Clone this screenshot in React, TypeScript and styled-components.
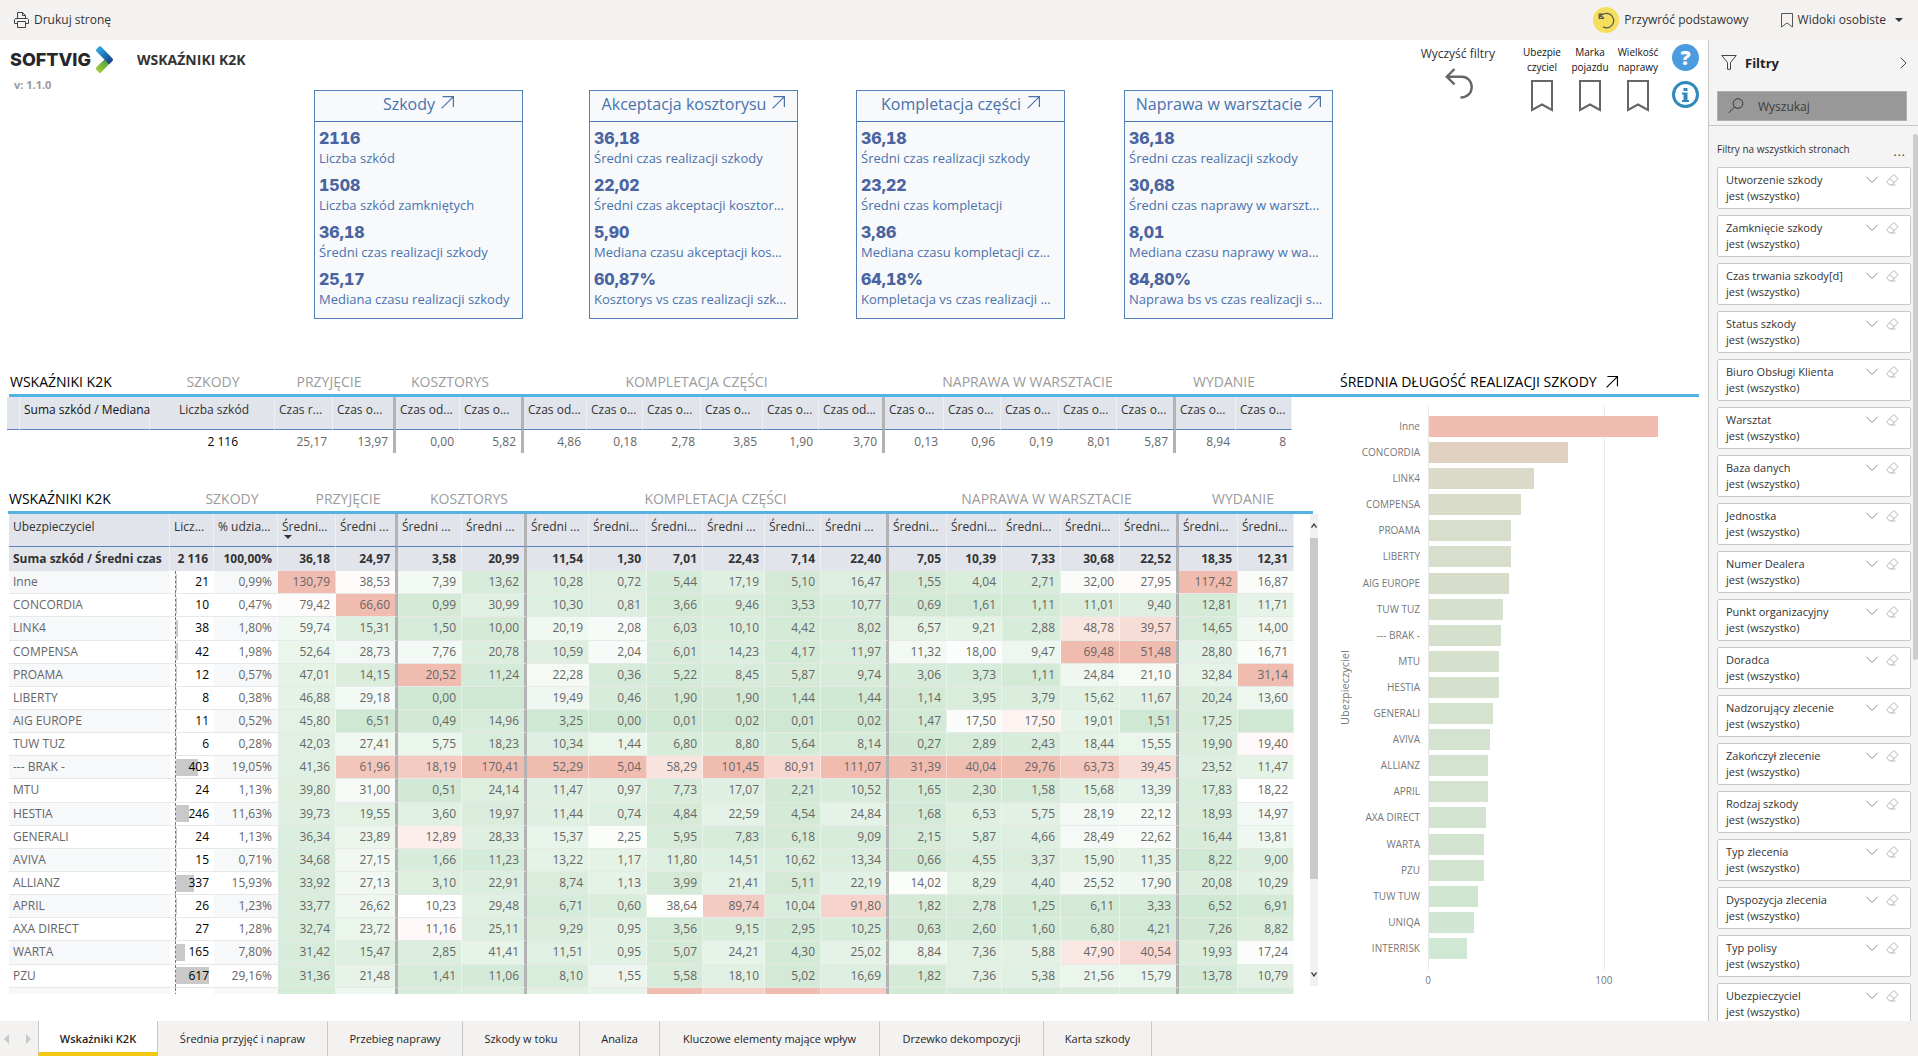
import React from "react";
import styled, { createGlobalStyle } from "styled-components";

/* ---------- data ---------- */

const filters = [
  "Utworzenie szkody",
  "Zamknięcie szkody",
  "Czas trwania szkody[d]",
  "Status szkody",
  "Biuro Obsługi Klienta",
  "Warsztat",
  "Baza danych",
  "Jednostka",
  "Numer Dealera",
  "Punkt organizacyjny",
  "Doradca",
  "Nadzorujący zlecenie",
  "Zakończył zlecenie",
  "Rodzaj szkody",
  "Typ zlecenia",
  "Dyspozycja zlecenia",
  "Typ polisy",
  "Ubezpieczyciel",
];

const tabs: [string, number][] = [
  ["Wskaźniki K2K", 120],
  ["Średnia przyjęć i napraw", 170],
  ["Przebieg naprawy", 135],
  ["Szkody w toku", 117],
  ["Analiza", 80],
  ["Kluczowe elementy mające wpływ", 220],
  ["Drzewko dekompozycji", 164],
  ["Karta szkody", 108],
];

const kpis = [
  {
    title: "Szkody",
    items: [
      ["2116", "Liczba szkód"],
      ["1508", "Liczba szkód zamkniętych"],
      ["36,18", "Średni czas realizacji szkody"],
      ["25,17", "Mediana czasu realizacji szkody"],
    ],
  },
  {
    title: "Akceptacja kosztorysu",
    items: [
      ["36,18", "Średni czas realizacji szkody"],
      ["22,02", "Średni czas akceptacji kosztor..."],
      ["5,90", "Mediana czasu akceptacji kos..."],
      ["60,87%", "Kosztorys vs czas realizacji szk..."],
    ],
  },
  {
    title: "Kompletacja części",
    items: [
      ["36,18", "Średni czas realizacji szkody"],
      ["23,22", "Średni czas kompletacji"],
      ["3,86", "Mediana czasu kompletacji cz..."],
      ["64,18%", "Kompletacja vs czas realizacji ..."],
    ],
  },
  {
    title: "Naprawa w warsztacie",
    items: [
      ["36,18", "Średni czas realizacji szkody"],
      ["30,68", "Średni czas naprawy w warszt..."],
      ["8,01", "Mediana czasu naprawy w wa..."],
      ["84,80%", "Naprawa bs vs czas realizacji s..."],
    ],
  },
];

const groups = ["SZKODY", "PRZYJĘCIE", "KOSZTORYS", "KOMPLETACJA CZĘŚCI", "NAPRAWA W WARSZTACIE", "WYDANIE"];

const medianCols = [13, 130, 125, 58, 63, 64, 64, 63, 56, 58, 62, 56, 66, 59, 57, 58, 58, 59, 60, 56];
const medianHeads = [
  "Czas r...", "Czas o...", "Czas od...", "Czas o...", "Czas od...", "Czas o...", "Czas o...", "Czas o...",
  "Czas o...", "Czas od...", "Czas o...", "Czas o...", "Czas o...", "Czas o...", "Czas o...", "Czas o...", "Czas o...",
];
const medianValues = [
  "25,17", "13,97", "0,00", "5,82", "4,86", "0,18", "2,78", "3,85", "1,90", "3,70",
  "0,13", "0,96", "0,19", "8,01", "5,87", "8,94", "8",
];

const avgCols = [161, 44, 64, 58, 62, 64, 65, 62, 58, 56, 62, 56, 68, 58, 55, 59, 59, 59, 59, 56];
const avgHeads = [
  "Średni...", "Średni ...", "Średni ...", "Średni ...", "Średni ...", "Średni...", "Średni...", "Średni ...",
  "Średni...", "Średni ...", "Średni...", "Średni...", "Średni...", "Średni...", "Średni...", "Średni...", "Średni...",
];
const avgTotals = "36,18 24,97 3,58 20,99 11,54 1,30 7,01 22,43 7,14 22,40 7,05 10,39 7,33 30,68 22,52 18,35 12,31".split(" ");

/* indexes of the measures that close a process stage */
const stageEnds = new Set([1, 3, 9, 14]);

/* name | claims | share | seventeen averages, "-" stands for no data */
const avgRows = `Inne|21|0,99%|130,79 38,53 7,39 13,62 10,28 0,72 5,44 17,19 5,10 16,47 1,55 4,04 2,71 32,00 27,95 117,42 16,87
CONCORDIA|10|0,47%|79,42 66,60 0,99 30,99 10,30 0,81 3,66 9,46 3,53 10,77 0,69 1,61 1,11 11,01 9,40 12,81 11,71
LINK4|38|1,80%|59,74 15,31 1,50 10,00 20,19 2,08 6,03 10,10 4,42 8,02 6,57 9,21 2,88 48,78 39,57 14,65 14,00
COMPENSA|42|1,98%|52,64 28,73 7,76 20,78 10,59 2,04 6,01 14,23 4,17 11,97 11,32 18,00 9,47 69,48 51,48 28,80 16,71
PROAMA|12|0,57%|47,01 14,15 20,52 11,24 22,28 0,36 5,22 8,45 5,87 9,74 3,06 3,73 1,11 24,84 21,10 32,84 31,14
LIBERTY|8|0,38%|46,88 29,18 0,00 - 19,49 0,46 1,90 1,90 1,44 1,44 1,14 3,95 3,79 15,62 11,67 20,24 13,60
AIG EUROPE|11|0,52%|45,80 6,51 0,49 14,96 3,25 0,00 0,01 0,02 0,01 0,02 1,47 17,50 17,50 19,01 1,51 17,25 -
TUW TUZ|6|0,28%|42,03 27,41 5,75 18,23 10,34 1,44 6,80 8,80 5,64 8,14 0,27 2,89 2,43 18,44 15,55 19,90 19,40
--- BRAK -|403|19,05%|41,36 61,96 18,19 170,41 52,29 5,04 58,29 101,45 80,91 111,07 31,39 40,04 29,76 63,73 39,45 23,52 11,47
MTU|24|1,13%|39,80 31,00 0,51 24,14 11,47 0,97 7,73 17,07 2,21 10,52 1,65 2,30 1,58 15,68 13,39 17,83 18,22
HESTIA|246|11,63%|39,73 19,55 3,60 19,97 11,44 0,74 4,84 22,59 4,54 24,84 1,68 6,53 5,75 28,19 22,12 18,93 14,97
GENERALI|24|1,13%|36,34 23,89 12,89 28,33 15,37 2,25 5,95 7,83 6,18 9,09 2,15 5,87 4,66 28,49 22,62 16,44 13,81
AVIVA|15|0,71%|34,68 27,15 1,66 11,23 13,22 1,17 11,80 14,51 10,62 13,34 0,66 4,55 3,37 15,90 11,35 8,22 9,00
ALLIANZ|337|15,93%|33,92 27,13 3,10 22,91 8,74 1,13 3,99 21,41 5,11 22,19 14,02 8,29 4,40 25,52 17,90 20,08 10,29
APRIL|26|1,23%|33,77 26,62 10,23 29,48 6,71 0,60 38,64 89,74 10,04 91,80 1,82 2,78 1,25 6,11 3,33 6,52 6,91
AXA DIRECT|27|1,28%|32,74 23,72 11,16 25,11 9,29 0,95 3,56 9,15 2,95 10,25 0,63 2,60 1,60 6,80 4,21 7,26 8,82
WARTA|165|7,80%|31,42 15,47 2,85 41,41 11,51 0,95 5,07 24,21 4,30 25,02 8,84 7,36 5,88 47,90 40,54 19,93 17,24
PZU|617|29,16%|31,36 21,48 1,41 11,06 8,10 1,55 5,58 18,10 5,02 16,69 1,82 7,36 5,38 21,56 15,79 13,78 10,79`
  .split("\n")
  .map((line) => {
    const [name, count, share, values] = line.split("|");
    return { name, count: Number(count), share, values: values.split(" ") };
  });

/* scale of each measure: [lowest, highest] */
const scales: [number, number][] = [
  [22, 130.79], [6.51, 66.6], [0, 20.52], [0, 170.41], [3, 52.29], [0, 5.04], [0, 82], [0, 101.45], [0, 101],
  [0, 111.07], [0, 31.39], [0, 40.04], [0, 29.76], [3, 69.48], [1.5, 51.48], [6.5, 117.42], [5.5, 31.14],
];
const nextRow = [28, 26, 2, 22, 12, 1.2, 82, 88, 101, 97, 1.2, 2, 1.5, 8, 5, 9, 7];

const chartRows: [string, number][] = [
  ["Inne", 130.79], ["CONCORDIA", 79.42], ["LINK4", 59.74], ["COMPENSA", 52.64], ["PROAMA", 47.01],
  ["LIBERTY", 46.88], ["AIG EUROPE", 45.8], ["TUW TUZ", 42.03], ["--- BRAK -", 41.36], ["MTU", 39.8],
  ["HESTIA", 39.73], ["GENERALI", 36.34], ["AVIVA", 34.68], ["ALLIANZ", 33.92], ["APRIL", 33.77],
  ["AXA DIRECT", 32.74], ["WARTA", 31.42], ["PZU", 31.36], ["TUW TUW", 28], ["UNIQA", 25.8], ["INTERRISK", 21.9],
];
const CHART_MAX = 149;

/* ---------- colour scales ---------- */

const GREEN = [207, 232, 211];
const WHITE = [255, 255, 255];
const RED = [241, 188, 176];

const mix = (a: number[], b: number[], t: number) =>
  `rgb(${a.map((v, i) => Math.round(v + (b[i] - v) * t)).join(",")})`;

const heat = (value: number, [lo, hi]: [number, number]) => {
  const t = Math.min(1, Math.max(0, (value - lo) / (hi - lo)));
  return t < 0.5 ? mix(GREEN, WHITE, t * 2) : mix(WHITE, RED, t * 2 - 1);
};

const toNumber = (text: string) => (text === "-" ? 0 : Number(text.replace(",", ".")));

/* ---------- styles ---------- */

const Global = createGlobalStyle`
  *, *::before, *::after { box-sizing: border-box; }
  body { margin: 0; background: #fff; }
  body, button, input, table {
    font-family: "Open Sans", "Noto Sans", sans-serif;
    font-size: 12px;
    color: #333;
  }
  button { background: none; border: 0; padding: 0; cursor: pointer; }
  h1, h2, h3, p, dl, dd, dt, ul { margin: 0; padding: 0; font-weight: 400; }
  ul { list-style: none; }
  svg { display: block; flex: none; }
`;

const App_ = styled.div`
  display: grid;
  grid-template-rows: 40px minmax(0, 1fr) 35px;
  height: 100vh;
  overflow: hidden;
`;

const TopBar = styled.header`
  display: flex;
  align-items: center;
  padding: 0 15px 0 14px;
  background: #f3f2f1;
`;

const BarButton = styled.button<{ $push?: boolean }>`
  display: flex;
  align-items: center;
  gap: 5px;
  line-height: 18px;
  margin-left: ${(p) => (p.$push ? "auto" : "0")};
`;

const UndoBadge = styled.span`
  display: grid;
  place-items: center;
  width: 26px;
  height: 26px;
  border-radius: 50%;
  background: #f6df5c;
`;

const ViewsButton = styled(BarButton)`
  margin-left: 32px;

  svg:last-child {
    margin-left: 4px;
  }
`;

const Main = styled.div`
  display: grid;
  grid-template-columns: minmax(0, 1fr) 210px;
  min-height: 0;
`;

const Report = styled.main`
  display: flex;
  flex-direction: column;
  min-height: 0;
  padding-bottom: 27px;
`;

const ReportHead = styled.div`
  display: grid;
  grid-template-columns: 314fr 1019fr 375fr;
`;

const Brand = styled.div`
  display: grid;
  grid-template-columns: auto 1fr;
  align-content: start;
  column-gap: 24px;
  padding: 6px 0 0 10px;
`;

const Logo = styled.div`
  display: flex;
  align-items: center;
  gap: 5px;
  height: 27px;
  font: 800 18px/27px Inter, sans-serif;
  color: #27262b;
`;

const PageTitle = styled.h1`
  font-size: 14px;
  font-weight: 700;
  line-height: 27px;
`;

const Version = styled.p`
  padding: 3px 0 0 4px;
  font-size: 11px;
  font-weight: 700;
  line-height: 18px;
  color: #999;
`;

const Kpis = styled.div`
  display: grid;
  grid-template-columns: 275fr 267fr 268fr 209fr;
  padding-top: 50px;
`;

const KpiCard = styled.section`
  width: 209px;
  border: 1px solid #5580b8;
  background: #f7f9fb;
  color: #4a72ad;
`;

const KpiTitle = styled.h2`
  display: flex;
  justify-content: center;
  gap: 6px;
  height: 31px;
  border-bottom: 1px solid #4a72ad;
  font-size: 16px;
  line-height: 26px;
  white-space: nowrap;

  svg {
    margin-top: 5px;
  }
`;

const KpiList = styled.dl`
  display: grid;
  gap: 7px;
  padding: 6px 0 9px 4px;
`;

const KpiItem = styled.div`
  display: flex;
  flex-direction: column-reverse;
  line-height: 20px;
  white-space: nowrap;
`;

const KpiLabel = styled.dt`
  font-size: 13px;
`;

const KpiValue = styled.dd`
  font: 800 16px/20px Inter, sans-serif;
  font-variant-numeric: tabular-nums;
  color: #4964a0;
`;

const Actions = styled.div`
  display: flex;
  justify-content: flex-end;
  align-items: flex-start;
  padding: 4px 9px 0 0;
`;

const ClearButton = styled.button`
  display: grid;
  justify-items: center;
  gap: 4px;
  margin-right: 23px;
  line-height: 20px;

  svg {
    margin-left: 2px;
  }
`;

const MarkButton = styled.button`
  display: grid;
  justify-items: center;
  gap: 5px;
  width: 48px;
  padding-top: 1px;
  font-size: 10px;
  line-height: 15px;
  color: #111;
`;

const HelpColumn = styled.div`
  display: grid;
  gap: 10px;
  margin-left: 10px;
`;

const HelpButton = styled.button`
  width: 27px;
  height: 27px;
  border-radius: 50%;
  background: #4a9be0;
  color: #fff;
  font-size: 20px;
  font-weight: 800;
  line-height: 27px;
`;

const InfoButton = styled.button`
  display: grid;
  place-items: center;
  width: 27px;
  height: 27px;
  border: 3px solid #2f89bd;
  border-radius: 50%;
`;

const SectionBar = styled.div`
  display: grid;
  grid-template-columns: 1330fr 360fr;
  height: 28px;
  margin: 50px 9px 0;
  border-bottom: 3px solid #55b2e4;
`;

const StageBar = styled.div<{ $ruled?: boolean }>`
  display: grid;
  grid-template-columns: ${(p) =>
    p.$ruled ? "176fr 96fr 136fr 106fr 387fr 275fr 118fr 11fr" : "156fr 96fr 136fr 106fr 387fr 275fr 118fr 56fr"};
  height: ${(p) => (p.$ruled ? "28px" : "auto")};
  margin: ${(p) => (p.$ruled ? "33px 26px 0 8px" : "0")};
  border-bottom: ${(p) => (p.$ruled ? "3px solid #55b2e4" : "0")};
  line-height: 26px;
`;

const SectionTitle = styled.h2`
  display: flex;
  gap: 9px;
  padding-left: 1px;
  font-size: 14px;
  line-height: 26px;
  color: #000;
  white-space: nowrap;

  svg {
    margin-top: 7px;
  }
`;

const StageName = styled.span`
  font-size: 14px;
  text-align: center;
  color: #9b9b9b;
  white-space: nowrap;
`;

const Body = styled.div`
  display: grid;
  grid-template-columns: 1339fr 369fr;
  flex: 1;
  min-height: 0;
`;

const Tables = styled.div`
  display: flex;
  flex-direction: column;
  min-width: 0;
  min-height: 0;
`;

const Table = styled.table<{ $h?: number }>`
  width: 100%;
  height: ${(p) => (p.$h ? `${p.$h}px` : "auto")};
  table-layout: fixed;
  border-collapse: separate;
  border-spacing: 0;
  line-height: 18px;
`;

const MedianWrap = styled.div`
  padding: 0 47px 0 7px;
`;

const AverageWrap = styled.div`
  display: grid;
  grid-template-columns: minmax(0, 1fr) 8px;
  column-gap: 16px;
  flex: 1;
  min-height: 0;
  padding: 0 21px 0 9px;
`;

const Clip = styled.div`
  min-height: 0;
  overflow: hidden;
`;

const Col = styled.col<{ $w: number }>`
  width: ${(p) => p.$w}px;
`;

const edge = (end?: boolean) => (end ? "3px solid #b3b3b3" : "1px solid rgba(255,255,255,0.45)");

const HeadCell = styled.th<{ $end?: boolean; $center?: boolean; $dark?: boolean }>`
  height: 33px;
  padding: 4px 0 0 4px;
  border-right: ${(p) => edge(p.$end)};
  border-bottom: 1px solid #5b84bf;
  background: #e1e4ea;
  color: ${(p) => (p.$dark ? "#111" : "#333")};
  font-weight: 400;
  text-align: ${(p) => (p.$center ? "center" : "left")};
  vertical-align: top;
  white-space: nowrap;

  svg {
    margin: -1px 0 0 2px;
  }
`;

const TotalHead = styled.th`
  height: 24px;
  padding: 0 0 0 4px;
  border-right: 1px solid rgba(255, 255, 255, 0.45);
  background: #e1e4ea;
  font-weight: 700;
  text-align: left;
  white-space: nowrap;
`;

const TotalCell = styled.td<{ $end?: boolean }>`
  height: 24px;
  padding: 0 5px 0 0;
  border-right: ${(p) => edge(p.$end)};
  background: #e1e4ea;
  font-weight: 700;
  text-align: right;
  white-space: nowrap;
`;

const Cell = styled.td<{ $end?: boolean; $inset?: number; $dark?: boolean }>`
  height: 23px;
  padding: 0 ${(p) => p.$inset ?? 5}px 0 0;
  border-right: ${(p) => edge(p.$end)};
  color: ${(p) => (p.$dark ? "#000" : "#666")};
  text-align: right;
  white-space: nowrap;
`;

const GridRow = styled.tr`
  &:nth-child(even) {
    background: #f7f8fa;
  }

  td,
  th {
    border-bottom: 1px solid #e6e9e7;
  }
`;

const NameCell = styled.th`
  height: 23px;
  padding: 0 0 0 4px;
  color: #666;
  font-weight: 400;
  text-align: left;
  white-space: nowrap;
`;

const CountCell = styled.td`
  height: 23px;
  padding: 0 5px;
  background: #fff;
`;

const CountBox = styled.div`
  display: grid;
  align-items: center;
  height: 22px;
  border-left: 1px dashed #777;
  color: #000;

  > * {
    grid-area: 1 / 1;
  }
`;

const CountBar = styled.i`
  height: 17px;
  background: #c9c9c9;
`;

const CountValue = styled.span`
  justify-self: end;
`;

const ScrollTrack = styled.div`
  display: flex;
  flex-direction: column;
  justify-content: space-between;
  align-items: center;
  height: 472px;
  padding: 9px 0;
  background: #f1f1f1;
`;

const ScrollThumb = styled.div`
  width: 8px;
  height: 341px;
  margin: 10px 0 auto;
  background: #c9c9c9;
`;

const Chart = styled.div`
  display: grid;
  grid-template-columns: 11px 70px minmax(0, 1fr);
  grid-template-rows: minmax(0, 1fr) 24px;
  min-height: 0;
  padding: 8px 18px 0 0;
  font-size: 10px;
  color: #777;
`;

const AxisTitle = styled.div`
  writing-mode: vertical-rl;
  rotate: 180deg;
  font-size: 11px;
  line-height: 11px;
  text-align: center;
  color: #777;
`;

const ChartLabels = styled.div`
  display: flex;
  flex-direction: column;
  justify-content: space-between;
  padding: 11px 0;
  text-align: right;
  line-height: 21px;
  white-space: nowrap;
`;

const Plot = styled.div`
  position: relative;
  display: flex;
  flex-direction: column;
  justify-content: space-between;
  margin-left: 8px;
  padding: 11px 0;
  border-left: 1px solid #e8e8e8;
`;

const GridLine = styled.i`
  position: absolute;
  top: 0;
  bottom: 0;
  width: 1px;
  background: #e8e8e8;
`;

const Bar = styled.div`
  position: relative;
  height: 21px;
`;

const Ticks = styled.div`
  position: relative;
  grid-column: 3;
  margin-left: 8px;
`;

const Tick = styled.span`
  position: absolute;
  top: 2px;
  width: 30px;
  margin-left: -15px;
  line-height: 16px;
  text-align: center;
`;

const Pane = styled.aside`
  display: flex;
  flex-direction: column;
  min-height: 0;
  border-left: 1px solid #c8c8c8;
  background: #f4f4f4;
`;

const PaneHead = styled.div`
  display: flex;
  align-items: center;
  height: 45px;
  padding: 0 11px 0 12px;
`;

const PaneTitle = styled.h2`
  flex: 1;
  padding-left: 8px;
  font-size: 13px;
  font-weight: 700;
  color: #222;
`;

const SearchBox = styled.label`
  display: flex;
  align-items: center;
  gap: 14px;
  height: 30px;
  margin: 6px 11px 4px 8px;
  padding-left: 10px;
  border: 1px solid #b0b0b0;
  background: #989898;
`;

const SearchInput = styled.input`
  width: 100px;
  padding: 0;
  border: 0;
  background: none;
  outline: 0;

  &::placeholder {
    color: #3c3c3c;
    opacity: 1;
  }
`;

const PaneBody = styled.div`
  display: grid;
  grid-template-columns: minmax(0, 1fr) 5px;
  column-gap: 2px;
  flex: 1;
  min-height: 0;
  overflow: hidden;
  padding: 8px 0 0 8px;
  border-top: 1px solid #c8c8c8;
`;

const PaneScroll = styled.div`
  height: 526px;
  border-radius: 3px;
  background: #cdcdcd;
`;

const PaneCaption = styled.div`
  display: flex;
  justify-content: space-between;
  height: 33px;
  padding-right: 5px;
  font-size: 10px;
  line-height: 30px;
`;

const MoreButton = styled.button`
  height: 36px;
  line-height: 36px;
  letter-spacing: 1px;
`;

const FilterCard = styled.li`
  display: flex;
  align-items: flex-start;
  height: 42px;
  margin-bottom: 6px;
  padding: 4px 11px 0 8px;
  border: 1px solid #c8c8c8;
  border-radius: 2px;
  background: #fff;
  font-size: 11px;
  line-height: 16px;
`;

const FilterText = styled.div`
  flex: 1;
  white-space: nowrap;
`;

const IconButton = styled.button`
  margin-left: 8px;
`;

const TabBar = styled.nav`
  display: flex;
  background: #f3f2f1;
`;

const Pager = styled.div`
  display: flex;
  justify-content: space-between;
  align-items: center;
  width: 38px;
  padding: 0 7px 0 4px;
`;

const Tab = styled.button<{ $w: number; $active?: boolean }>`
  width: ${(p) => p.$w}px;
  padding-top: ${(p) => (p.$active ? "4px" : "0")};
  border-right: 1px solid #c8c8c8;
  border-left: ${(p) => (p.$active ? "1px solid #c8c8c8" : "0")};
  border-bottom: ${(p) => (p.$active ? "4px solid #f2c811" : "0")};
  background: ${(p) => (p.$active ? "#fff" : "none")};
  font-size: 11px;
  font-weight: ${(p) => (p.$active ? 600 : 400)};
  color: #252423;
  white-space: nowrap;
`;

/* ---------- icons ---------- */

const PrinterIcon = () => (
  <svg width="15" height="16" viewBox="0 0 15 16" fill="none" stroke="#444" strokeWidth="1">
    <path d="M3.5 6.5V.5h5l3 3v3M8.5.5v3h3M3.5 11.5h-3v-4l1-1h12l1 1v4h-3M3.5 9.500h8v6h-8z" />
  </svg>
);

const RestoreIcon = () => (
  <svg width="17" height="17" viewBox="0 0 17 17" fill="none" stroke="#555" strokeWidth="1.2">
    <path d="M1.500 5.500C3.500 2 8.500.2 12 2.300c4 2.400 4.800 7.500 2 10.800-2.300 2.700-6 3.300-9 1.600M6 2H1.200v4.500H6M1.200 2L6 6.500" />
  </svg>
);

const BookmarkIcon = ({ w, h, stroke, weight }: { w: number; h: number; stroke: string; weight: number }) => {
  const m = weight / 2;
  const notch = weight > 1 ? w / 4 : w / 3;
  return (
    <svg width={w} height={h} fill="none" stroke={stroke} strokeWidth={weight}>
      <path d={`M${m} ${m}H${w - m}V${h - weight}L${w / 2} ${h - notch - weight}L${m} ${h - weight}Z`} />
    </svg>
  );
};

const Chevron = () => (
  <svg width="17" height="27" viewBox="0 0 17 27">
    <defs>
      <linearGradient id="logoBlue" x1="0" y1="0" x2="1" y2="1">
        <stop offset="0" stopColor="#35b6ea" />
        <stop offset="0.55" stopColor="#1c6fb4" />
        <stop offset="1" stopColor="#1d2f7c" />
      </linearGradient>
      <linearGradient id="logoGreen" x1="1" y1="0" x2="0" y2="1">
        <stop offset="0" stopColor="#1f8a4c" />
        <stop offset="1" stopColor="#b5d334" />
      </linearGradient>
    </defs>
    <path d="M8.500 13.500L13 9l3.500 5.500L5 26.500q-1 1-2 0L.5 24q-1-1.500 0-3z" fill="url(#logoGreen)" />
    <path d="M.5 5.500q-1-1.500 0-2.500L3 .500q1-.9 2 0l11.500 12q1 1.200 0 2.200L13 18.300z" fill="url(#logoBlue)" />
  </svg>
);

const UpRight = ({ size = 13 }: { size?: number }) => (
  <svg width={size} height={size} viewBox="0 0 13 13" fill="none" stroke="currentColor" strokeWidth="1.200">
    <path d="M1.500.6h10.900v10.500M12.400.6L.6 12.400" />
  </svg>
);

const UndoIcon = () => (
  <svg width="28" height="31" viewBox="0 0 28 31" fill="none" stroke="#666" strokeWidth="2.400">
    <path d="M9.500 1L1.800 8.700l7.700 7.700M1.800 8.700H17c5.500 0 9.700 4.600 9.700 10.300S22.500 29.500 15.500 29.500" />
  </svg>
);

const InfoGlyph = () => (
  <svg width="9" height="14" viewBox="0 0 9 14" fill="#2f89bd">
    <path d="M2.500 0h4v3h-4zM1 4.500h5.500v7.500H8v2H1v-2h1.500V6.500H1z" />
  </svg>
);

const FunnelIcon = () => (
  <svg width="16" height="15" viewBox="0 0 16 15" fill="none" stroke="#444" strokeWidth="1">
    <path d="M.8.500h14.400L9.500 7.500v6.800h-3V7.500z" />
  </svg>
);

const SearchIcon = () => (
  <svg width="16" height="16" viewBox="0 0 16 16" fill="none" stroke="#333" strokeWidth="1">
    <circle cx="10" cy="5.500" r="4.800" />
    <path d="M6.500 9L.8 14.800" />
  </svg>
);

const DownIcon = () => (
  <svg width="12" height="16" viewBox="0 0 12 16" fill="none" stroke="#888" strokeWidth="1">
    <path d="M.5 5L6 10.500 11.500 5" />
  </svg>
);

const EraserIcon = () => (
  <svg width="13" height="16" viewBox="0 0 13 16" fill="none" stroke="#b3b3b3" strokeWidth="1">
    <path d="M7.800 2.500l4.200 4.200-6.200 6.300H3.700L1 10.200v-.9zM3.600 6.600l4.600 4.200M5.500 13h4" />
  </svg>
);

const RightIcon = () => (
  <svg width="7" height="12" viewBox="0 0 7 12" fill="none" stroke="#444" strokeWidth="1">
    <path d="M.8.800L6 6 .8 11.200" />
  </svg>
);

const Caret = ({ dir, fill = "#333" }: { dir: "down" | "left" | "right"; fill?: string }) => {
  const d = { down: "M0 0h8L4 4z", left: "M5 0v10L0 5z", right: "M0 0v10l5-5z" }[dir];
  const wide = dir === "down";
  return (
    <svg width={wide ? 8 : 5} height={wide ? 4 : 10} fill={fill}>
      <path d={d} />
    </svg>
  );
};

const ScrollArrow = ({ up }: { up?: boolean }) => (
  <svg width="6" height="5" viewBox="0 0 6 5" fill="none" stroke="#444" strokeWidth="1.300">
    <path d={up ? "M.5 4.500L3 1l2.500 3.500" : "M.5.500L3 4 5.500.500"} />
  </svg>
);

/* ---------- parts ---------- */

const StageNames = () => (
  <>
    {groups.map((g) => (
      <StageName key={g}>{g}</StageName>
    ))}
  </>
);

const MedianTable = () => (
  <MedianWrap>
    <Table>
      <colgroup>
        {medianCols.map((w, i) => (
          <Col key={i} $w={w} />
        ))}
      </colgroup>
      <thead>
        <tr>
          <HeadCell />
          <HeadCell $dark>Suma szkód / Mediana</HeadCell>
          <HeadCell $center>Liczba szkód</HeadCell>
          {medianHeads.map((h, i) => (
            <HeadCell key={i} $end={stageEnds.has(i)}>
              {h}
            </HeadCell>
          ))}
        </tr>
      </thead>
      <tbody>
        <tr>
          <Cell />
          <Cell />
          <Cell $dark $inset={36}>
            2 116
          </Cell>
          {medianValues.map((v, i) => (
            <Cell key={i} $end={stageEnds.has(i)}>
              {v}
            </Cell>
          ))}
        </tr>
      </tbody>
    </Table>
  </MedianWrap>
);

const AverageTable = () => (
  <AverageWrap>
    <Clip>
      <Table $h={497}>
        <colgroup>
          {avgCols.map((w, i) => (
            <Col key={i} $w={w} />
          ))}
        </colgroup>
        <thead>
          <tr>
            <HeadCell>Ubezpieczyciel</HeadCell>
            <HeadCell>Licz...</HeadCell>
            <HeadCell>% udzia...</HeadCell>
            {avgHeads.map((h, i) => (
              <HeadCell key={i} $end={stageEnds.has(i)}>
                {h}
                {i === 0 && <Caret dir="down" />}
              </HeadCell>
            ))}
          </tr>
        </thead>
        <tbody>
          <tr>
            <TotalHead>Suma szkód / Średni czas</TotalHead>
            <TotalCell>2 116</TotalCell>
            <TotalCell>100,00%</TotalCell>
            {avgTotals.map((v, i) => (
              <TotalCell key={i} $end={stageEnds.has(i)}>
                {v}
              </TotalCell>
            ))}
          </tr>
          {avgRows.map((row) => (
            <GridRow key={row.name}>
              <NameCell>{row.name}</NameCell>
              <CountCell>
                <CountBox>
                  <CountBar style={{ width: `${(row.count / 617) * 100}%` }} />
                  <CountValue>{row.count}</CountValue>
                </CountBox>
              </CountCell>
              <Cell>{row.share}</Cell>
              {row.values.map((v, i) => (
                <Cell key={i} $end={stageEnds.has(i)} style={{ background: heat(toNumber(v), scales[i]) }}>
                  {v === "-" ? "" : v}
                </Cell>
              ))}
            </GridRow>
          ))}
          <GridRow>
            <NameCell />
            <CountCell>
              <CountBox />
            </CountCell>
            <Cell />
            {nextRow.map((v, i) => (
              <Cell key={i} $end={stageEnds.has(i)} style={{ background: heat(v, scales[i]) }} />
            ))}
          </GridRow>
        </tbody>
      </Table>
    </Clip>
    <ScrollTrack>
      <ScrollArrow up />
      <ScrollThumb />
      <ScrollArrow />
    </ScrollTrack>
  </AverageWrap>
);

const DurationChart = () => {
  const low = chartRows[chartRows.length - 1][1];
  const high = chartRows[0][1];
  return (
    <Chart>
      <AxisTitle>Ubezpieczyciel</AxisTitle>
      <ChartLabels>
        {chartRows.map(([name]) => (
          <span key={name}>{name}</span>
        ))}
      </ChartLabels>
      <Plot>
        <GridLine style={{ left: `${(100 / CHART_MAX) * 100}%` }} />
        {chartRows.map(([name, value]) => (
          <Bar
            key={name}
            style={{
              width: `${(value / CHART_MAX) * 100}%`,
              background: mix(GREEN, RED, (value - low) / (high - low)),
            }}
          />
        ))}
      </Plot>
      <Ticks>
        <Tick style={{ left: 0 }}>0</Tick>
        <Tick style={{ left: `${(100 / CHART_MAX) * 100}%` }}>100</Tick>
      </Ticks>
    </Chart>
  );
};

const FilterPane = () => (
  <Pane>
    <PaneHead>
      <FunnelIcon />
      <PaneTitle>Filtry</PaneTitle>
      <button aria-label="Zwiń">
        <RightIcon />
      </button>
    </PaneHead>
    <SearchBox>
      <SearchIcon />
      <SearchInput placeholder="Wyszukaj" aria-label="Wyszukaj" />
    </SearchBox>
    <PaneBody>
      <div>
        <PaneCaption>
          Filtry na wszystkich stronach
          <MoreButton>...</MoreButton>
        </PaneCaption>
        <ul>
          {filters.map((name) => (
            <FilterCard key={name}>
              <FilterText>
                <p>{name}</p>
                <p>jest (wszystko)</p>
              </FilterText>
              <IconButton aria-label="Rozwiń">
                <DownIcon />
              </IconButton>
              <IconButton aria-label="Wyczyść">
                <EraserIcon />
              </IconButton>
            </FilterCard>
          ))}
        </ul>
      </div>
      <PaneScroll />
    </PaneBody>
  </Pane>
);

export default function App() {
  return (
    <App_>
      <Global />
      <TopBar>
        <BarButton>
          <PrinterIcon />
          Drukuj stronę
        </BarButton>
        <BarButton $push>
          <UndoBadge>
            <RestoreIcon />
          </UndoBadge>
          Przywróć podstawowy
        </BarButton>
        <ViewsButton>
          <BookmarkIcon w={12} h={15} stroke="#555" weight={1} />
          Widoki osobiste
          <Caret dir="down" />
        </ViewsButton>
      </TopBar>
      <Main>
        <Report>
          <ReportHead>
            <Brand>
              <Logo>
                SOFTVIG
                <Chevron />
              </Logo>
              <PageTitle>WSKAŹNIKI K2K</PageTitle>
              <Version>v: 1.1.0</Version>
            </Brand>
            <Kpis>
              {kpis.map((card) => (
                <KpiCard key={card.title}>
                  <KpiTitle>
                    {card.title}
                    <UpRight />
                  </KpiTitle>
                  <KpiList>
                    {card.items.map(([value, label]) => (
                      <KpiItem key={label}>
                        <KpiLabel>{label}</KpiLabel>
                        <KpiValue>{value}</KpiValue>
                      </KpiItem>
                    ))}
                  </KpiList>
                </KpiCard>
              ))}
            </Kpis>
            <Actions>
              <ClearButton>
                Wyczyść filtry
                <UndoIcon />
              </ClearButton>
              {[["Ubezpie", "czyciel"], ["Marka", "pojazdu"], ["Wielkość", "naprawy"]].map(([a, b]) => (
                <MarkButton key={a}>
                  <span>
                    {a}
                    <br />
                    {b}
                  </span>
                  <BookmarkIcon w={22} h={32} stroke="#666" weight={2} />
                </MarkButton>
              ))}
              <HelpColumn>
                <HelpButton>?</HelpButton>
                <InfoButton aria-label="Informacje">
                  <InfoGlyph />
                </InfoButton>
              </HelpColumn>
            </Actions>
          </ReportHead>
          <SectionBar>
            <StageBar>
              <SectionTitle>WSKAŹNIKI K2K</SectionTitle>
              <StageNames />
            </StageBar>
            <SectionTitle>
              ŚREDNIA DŁUGOŚĆ REALIZACJI SZKODY
              <UpRight size={12} />
            </SectionTitle>
          </SectionBar>
          <Body>
            <Tables>
              <MedianTable />
              <StageBar $ruled>
                <SectionTitle>WSKAŹNIKI K2K</SectionTitle>
                <StageNames />
              </StageBar>
              <AverageTable />
            </Tables>
            <DurationChart />
          </Body>
        </Report>
        <FilterPane />
      </Main>
      <TabBar>
        <Pager>
          <Caret dir="left" fill="#c8c8c8" />
          <Caret dir="right" fill="#c8c8c8" />
        </Pager>
        {tabs.map(([name, w], i) => (
          <Tab key={name} $w={w} $active={i === 0}>
            {name}
          </Tab>
        ))}
      </TabBar>
    </App_>
  );
}
